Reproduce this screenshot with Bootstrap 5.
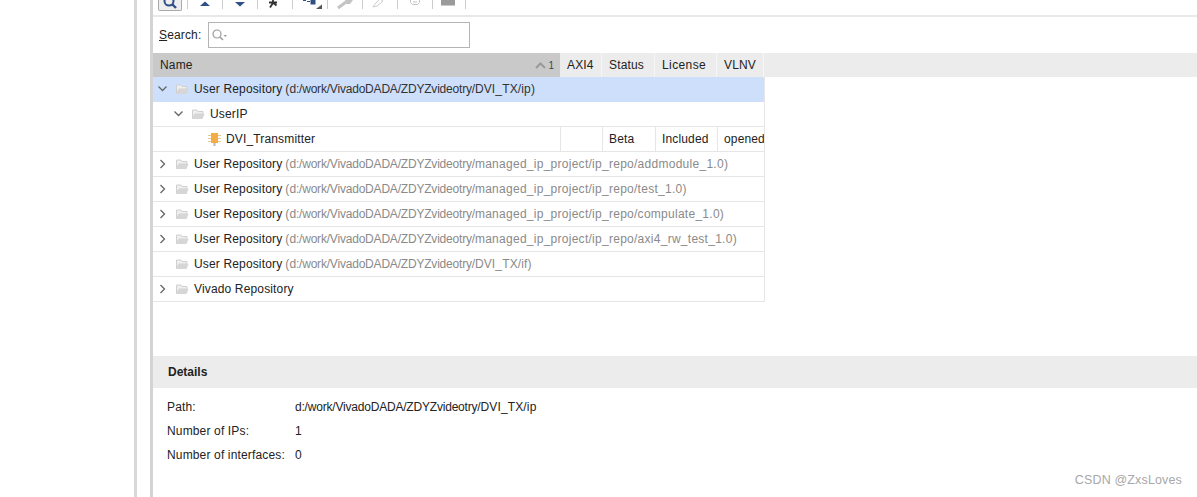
<!DOCTYPE html>
<html lang="en">
<head>
    <meta charset="UTF-8">
    <title>IP Catalog</title>
    <link href="https://cdn.jsdelivr.net/npm/bootstrap@5.3.3/dist/css/bootstrap.min.css" rel="stylesheet">
    <style>
        html, body { height: 100%; overflow: hidden; }
        body { font-family: "Liberation Sans", Arial, sans-serif; font-size: 12px; letter-spacing: .15px; color: #222; background: #fff; }
        .shell { width: 1197px; height: 497px; }
        .side-pane { width: 134px; border-right: 3px solid #d8d8d8; box-sizing: content-box; }
        .side-gap { width: 13px; }
        .main-pane { border-left: 3px solid #d4d4d4; min-width: 0; }

        .tool-strip { height: 17px; padding-left: 5px; border-bottom: 2px solid #e8e8e8; overflow: hidden; }
        .tool-active { width: 24px; height: 11px; margin-right: 5px; border: 1px solid #aaa; border-top: 0; background: #eee; border-radius: 0 0 2px 2px; }
        .tool-cell { width: 35px; height: 9px; border-left: 1px solid #ccc; flex: none; }
        .tool-cell svg { display: block; margin-left: 8px; }
        .tool-cell.tool-short { width: 33px; }

        .search-row { height: 36px; padding: 5px 0 5px 6px; }
        .search-row label { width: 49px; margin: 0; }
        .search-box { width: 262px; height: 26px; padding: 0 0 0 3px; border: 1px solid #b4b4b4; border-radius: 0; }
        .search-box input { border: 0; outline: 0; min-width: 0; flex: 1; background: transparent; }

        .ip-table { table-layout: fixed; width: 1044px; margin: 0; border-collapse: separate; border-spacing: 0; font-size: 12px; }
        .ip-table .col-name { width: 407px; }
        .ip-table .col-axi { width: 42px; }
        .ip-table .col-status { width: 53px; }
        .ip-table .col-license { width: 62px; }
        .ip-table .col-vlnv { width: 47px; }
        .ip-table th, .ip-table td { height: 25px; padding: 0 0 0 7px; font-weight: 400; color: #222; white-space: nowrap; overflow: hidden; vertical-align: middle; box-shadow: none; }
        .ip-table thead th { height: 24px; background: #ececec; border: 0; border-right: 1px solid #f6f6f6; }
        .ip-table thead th.name-head { background: #c9c9c9; border-right: 0; padding-right: 6px; }
        .ip-table thead th.fill-head { border-right: 0; }
        .ip-table thead th.license-head { letter-spacing: .4px; }
        .ip-table td { border: 0; border-bottom: 1px solid #e6e6e6; }
        .ip-table td.fill-cell { border: 0; border-left: 1px solid #e6e6e6; padding: 0; }
        .ip-table td.split-cell { border-left: 1px solid #e6e6e6; padding-left: 6px; }
        .ip-table td.tree-cell { padding: 0; }
        .ip-table tr.picked td.tree-cell { background: #cddffb; border-bottom-color: #cddffb; }
        .sort-wrap { gap: 2px; }
        .sort-mark { color: #444; font-size: 10px; letter-spacing: 0; }
        .tree-line { height: 24px; }
        .lvl-1 { padding-left: 5px; }
        .lvl-2 { padding-left: 21px; }
        .lvl-3 { padding-left: 37px; }
        .twisty { width: 18px; flex: none; }
        .twisty-gap { width: 18px; flex: none; }
        .folder-ico { margin-right: 5px; flex: none; }
        .repo-path { color: #8a8a8a; margin-left: 3px; }
        .picked .repo-path { color: #333; }
        .path-root { letter-spacing: -.2px; }
        .path-deep { letter-spacing: .27px; }

        .table-spacer { height: 54px; }
        .detail-head { height: 32px; padding-left: 15px; background: #ececec; font-weight: 700; letter-spacing: 0; }
        .detail-body { padding: 7px 0 0 14px; }
        .detail-line { height: 24px; }
        .detail-key { width: 128px; }

        .stamp { position: absolute; right: 15px; bottom: 7px; font-size: 12.5px; color: #a8a8a8; }
    </style>
</head>
<body>
    <div class="shell d-flex position-relative">
        <div class="side-pane flex-shrink-0"></div>
        <div class="side-gap flex-shrink-0"></div>

        <div class="main-pane flex-grow-1">
            <!-- Toolbar, cut off at the top of the shot -->
            <div class="tool-strip d-flex align-items-start">
                <div class="tool-active d-flex justify-content-center flex-shrink-0">
                    <svg width="16" height="10" viewBox="0 0 16 10"><circle cx="7" cy="1" r="4.5" fill="none" stroke="#2f4f86" stroke-width="2"/><path d="M10 4l4 4" stroke="#2f4f86" stroke-width="2.4"/></svg>
                </div>
                <div class="tool-cell"><svg width="20" height="14"><path d="M4 6L9 1.500 14 6z" fill="#2f4f86"/></svg></div>
                <div class="tool-cell"><svg width="20" height="14"><path d="M4 2H14L9 6.500z" fill="#2f4f86"/></svg></div>
                <div class="tool-cell"><svg width="20" height="14"><path d="M3 2.500H11M7 0V3M7 3L4 7.500M7.500 3L10.500 5.500" stroke="#333" stroke-width="1.800" fill="none"/></svg></div>
                <div class="tool-cell"><svg width="26" height="14"><path d="M2 .5H5M6 1.500H9" stroke="#2f4f86" fill="none"/><rect x="9.500" y="0" width="5" height="4.500" fill="#2f4f86"/><path d="M15 9L21 9 21 4.500z" fill="#555"/></svg></div>
                <div class="tool-cell"><svg width="20" height="14"><path d="M2 8L10 2" stroke="#c4c4c4" stroke-width="3"/><path d="M9 0H17L14 4H10z" fill="#c4c4c4"/></svg></div>
                <div class="tool-cell"><svg width="20" height="14"><path d="M2 7L4 4 9 -1 12 1 6 6z" fill="#fff" stroke="#cdcdcd"/></svg></div>
                <div class="tool-cell"><svg width="20" height="14"><path d="M4.500 -1H13.500V2.500L11.500 4.500H6.500L4.500 2.500z" fill="#fff" stroke="#c4c4c4"/><path d="M7 2H11" stroke="#c4c4c4"/></svg></div>
                <div class="tool-cell tool-short"><svg width="20" height="14"><rect x="0" y="0" width="14" height="5.500" fill="#9a9a9a"/></svg></div>
                <div class="tool-cell"></div>
            </div>

            <!-- Search -->
            <div class="search-row d-flex align-items-center">
                <label for="ipSearch"><u>S</u>earch:</label>
                <div class="form-control search-box d-flex align-items-center">
                    <svg width="18" height="12" viewBox="0 0 18 12" class="flex-shrink-0"><circle cx="5" cy="5" r="4" fill="none" stroke="#9a9a9a" stroke-width="1.200"/><path d="M8 8L11 11" stroke="#9a9a9a" stroke-width="1.500"/><path d="M11.500 6H15L13.200 8z" fill="#9a9a9a"/></svg>
                    <input id="ipSearch" type="text">
                </div>
            </div>

            <!-- Repository tree -->
            <table class="table ip-table">
                <colgroup>
                    <col class="col-name"><col class="col-axi"><col class="col-status"><col class="col-license"><col class="col-vlnv"><col>
                </colgroup>
                <thead>
                    <tr>
                        <th class="name-head">
                            <div class="d-flex justify-content-between align-items-center">
                                <span>Name</span>
                                <span class="d-flex align-items-center sort-wrap">
                                    <svg width="11" height="7"><path d="M1 6L5.500 1.500 10 6" fill="none" stroke="#999" stroke-width="2"/></svg>
                                    <span class="sort-mark">1</span>
                                </span>
                            </div>
                        </th>
                        <th>AXI4</th>
                        <th>Status</th>
                        <th class="license-head">License</th>
                        <th>VLNV</th>
                        <th class="fill-head"></th>
                    </tr>
                </thead>
                <tbody id="treeBody"></tbody>
            </table>

            <div class="table-spacer"></div>

            <!-- Details -->
            <div class="detail-head d-flex align-items-center">Details</div>
            <div class="detail-body">
                <div class="detail-line d-flex align-items-center"><span class="detail-key">Path:</span><span><span class="path-root">d:/work/VivadoDADA/ZDYZvideotry/</span>DVI_TX/ip</span></div>
                <div class="detail-line d-flex align-items-center"><span class="detail-key">Number of IPs:</span><span>1</span></div>
                <div class="detail-line d-flex align-items-center"><span class="detail-key">Number of interfaces:</span><span>0</span></div>
            </div>
        </div>

        <div class="stamp">CSDN @ZxsLoves</div>
    </div>

    <script>
        const FOLDER = '<svg class="folder-ico" width="13" height="11" viewBox="0 0 13 11"><path d="M.5 1H5L6 2.500H11V5H3L.5 9.500z" fill="#efefef" stroke="#d0d0d0"/><path d="M2.500 5H12.500L10.500 10H.5z" fill="#d6d6d6"/></svg>';
        const CHIP = '<svg class="folder-ico" width="13" height="14" viewBox="0 0 13 14"><path d="M0 3.500H3M0 6.500H3M0 9.500H3M10 3.500H13M10 6.500H13M10 9.500H13" stroke="#e6c994"/><rect x="3" y="1" width="7" height="10" fill="#f2ae45"/><path d="M6.500 11V14" stroke="#b5b5b5" stroke-width="2"/></svg>';
        const OPEN = '<svg class="twisty" width="18" height="8"><path d="M.5 1.500L4.500 5.500 8.500 1.500" fill="none" stroke="#666" stroke-width="1.300"/></svg>';
        const CLOSED = '<svg class="twisty" width="18" height="10"><path d="M2.500 1L6.500 5 2.500 9" fill="none" stroke="#666" stroke-width="1.300"/></svg>';
        const NONE = '<span class="twisty-gap"></span>';

        const ROOT = "d:/work/VivadoDADA/ZDYZvideotry/";
        const rows = [
            { picked: true, arrow: OPEN, name: "User Repository", path: "DVI_TX/ip" },
            { level: 2, arrow: OPEN, name: "UserIP" },
            { level: 3, ip: true, name: "DVI_Transmitter" },
            { arrow: CLOSED, name: "User Repository", deep: "managed_ip_project/ip_repo/addmodule_1.0" },
            { arrow: CLOSED, name: "User Repository", deep: "managed_ip_project/ip_repo/test_1.0" },
            { arrow: CLOSED, name: "User Repository", deep: "managed_ip_project/ip_repo/compulate_1.0" },
            { arrow: CLOSED, name: "User Repository", deep: "managed_ip_project/ip_repo/axi4_rw_test_1.0" },
            { arrow: NONE, name: "User Repository", path: "DVI_TX/if" },
            { arrow: CLOSED, name: "Vivado Repository" }
        ];

        function pathText(r) {
            if (!r.path && !r.deep) return '';
            const tail = r.deep ? '<span class="path-deep">' + r.deep + '</span>' : r.path;
            return '<span class="repo-path">(<span class="path-root">' + ROOT + '</span>' + tail + ')</span>';
        }

        document.getElementById("treeBody").innerHTML = rows.map(function (r) {
            const left = '<div class="tree-line d-flex align-items-center lvl-' + (r.level || 1) + '">'
                + (r.ip ? NONE + CHIP : (r.arrow + FOLDER))
                + '<span>' + r.name + '</span>'
                + pathText(r)
                + '</div>';
            if (r.ip) {
                return '<tr><td class="tree-cell">' + left + '</td><td class="split-cell"></td>'
                    + '<td class="split-cell">Beta</td><td class="split-cell">Included</td>'
                    + '<td class="split-cell">opened</td><td class="fill-cell"></td></tr>';
            }
            return '<tr class="' + (r.picked ? 'picked' : '') + '"><td class="tree-cell" colspan="5">' + left + '</td><td class="fill-cell"></td></tr>';
        }).join("");
    </script>
    <script src="https://cdn.jsdelivr.net/npm/bootstrap@5.3.3/dist/js/bootstrap.bundle.min.js"></script>
</body>
</html>
